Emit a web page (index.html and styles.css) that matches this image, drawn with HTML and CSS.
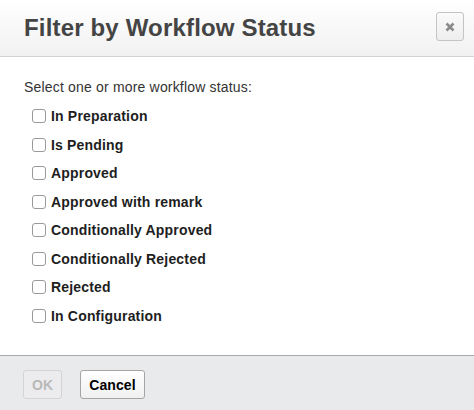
FILE: index.html
```html
<!DOCTYPE html>
<html>
<head>
<meta charset="utf-8">
<link rel="stylesheet" href="styles.css">
</head>
<body>
<div class="modal">
  <div class="modal-header">
    <h1 class="modal-title">Filter by Workflow Status</h1>
    <button class="close-btn" type="button" aria-label="Close">
      <svg width="10" height="10" viewBox="0 0 10 10"><path d="M1.5 1.5 L8.5 8.5 M8.5 1.5 L1.5 8.5" stroke="#8a8a8a" stroke-width="2.6" stroke-linecap="butt"/></svg>
    </button>
  </div>
  <div class="modal-body">
    <div class="intro">Select one or more workflow status:</div>
    <ul class="status-list">
      <li class="status-row"><span class="box"></span><span class="status-label">In Preparation</span></li>
      <li class="status-row"><span class="box"></span><span class="status-label">Is Pending</span></li>
      <li class="status-row"><span class="box"></span><span class="status-label">Approved</span></li>
      <li class="status-row"><span class="box"></span><span class="status-label">Approved with remark</span></li>
      <li class="status-row"><span class="box"></span><span class="status-label">Conditionally Approved</span></li>
      <li class="status-row"><span class="box"></span><span class="status-label">Conditionally Rejected</span></li>
      <li class="status-row"><span class="box"></span><span class="status-label">Rejected</span></li>
      <li class="status-row"><span class="box"></span><span class="status-label">In Configuration</span></li>
    </ul>
  </div>
  <div class="modal-footer">
    <button class="btn btn-disabled" type="button" disabled>OK</button>
    <button class="btn" type="button">Cancel</button>
  </div>
</div>
</body>
</html>
```

FILE: styles.css
```css
html, body {
  margin: 0;
  padding: 0;
  overflow: hidden;
  background: #ffffff;
}

body {
  font-family: "Liberation Sans", Arial, sans-serif;
  font-size: 14px;
  line-height: 20px;
  color: #333333;
  letter-spacing: 0.18px;
}

.modal {
  width: 474px;
  height: 410px;
  display: flex;
  flex-direction: column;
}

.modal-header {
  box-sizing: border-box;
  height: 57px;
  padding: 12px 10px 0 24px;
  display: flex;
  justify-content: space-between;
  align-items: flex-start;
  background: linear-gradient(to bottom, #ffffff 0%, #f1f1f1 100%);
  border-bottom: 1px solid #d2d2d2;
  flex: 0 0 auto;
}

.modal-title {
  margin: 2px 0 0 0;
  font-size: 24px;
  line-height: 28px;
  font-weight: bold;
  color: #444444;
  letter-spacing: 0.17px;
}

.close-btn {
  width: 28px;
  height: 29px;
  padding: 0;
  margin: 0;
  border: 1px solid #c4c4c4;
  border-radius: 3px;
  background: linear-gradient(to bottom, #fafafa 0%, #eeeeee 100%);
  display: flex;
  align-items: center;
  justify-content: center;
}

.modal-body {
  flex: 1 1 auto;
  padding: 20px 24px 0 24px;
}

.intro {
  margin-bottom: 5px;
  color: #333333;
}

.status-list {
  list-style: none;
  margin: 0;
  padding: 0 0 0 8px;
}

.status-row {
  height: 28.5px;
  display: flex;
  align-items: center;
  gap: 5px;
}

.box {
  width: 12px;
  height: 12px;
  border: 1px solid #9a9a9a;
  border-radius: 3px;
  background: #ffffff;
  flex: 0 0 auto;
}

.status-label {
  font-weight: bold;
  color: #1e1e1e;
}

.modal-footer {
  flex: 0 0 auto;
  height: 55px;
  box-sizing: border-box;
  padding: 14px 0 0 23px;
  background: #e9eaec;
  border-top: 1px solid #a9a9a9;
  display: flex;
  align-items: flex-start;
  gap: 18px;
}

.btn {
  height: 29px;
  padding: 0 8px;
  margin: 0;
  font-family: "Liberation Sans", Arial, sans-serif;
  font-size: 14px;
  font-weight: bold;
  letter-spacing: 0.1px;
  color: #000000;
  border: 1px solid #a5a5a5;
  border-radius: 3px;
  background: linear-gradient(to bottom, #ffffff 0%, #f0f0f0 100%);
}

.btn-disabled {
  color: #b9b9b9;
  border-color: #d4d4d4;
  background: #ececee;
}
```
